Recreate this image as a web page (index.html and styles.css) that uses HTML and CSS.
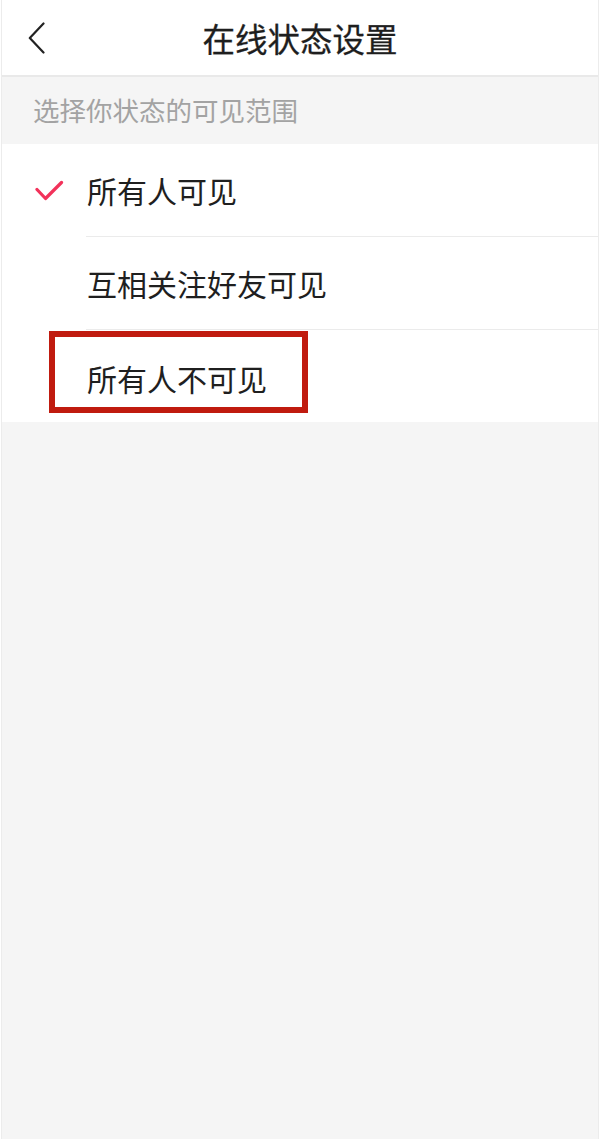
FILE: index.html
```html
<!DOCTYPE html>
<html lang="zh-CN">
<head>
<meta charset="utf-8">
<title>在线状态设置</title>
<link rel="stylesheet" href="styles.css">
</head>
<body>
<div class="page">
  <header class="header">
    <div class="back">
      <svg width="18" height="32" viewBox="0 0 18 32" aria-hidden="true">
        <polyline points="15.5,1.5 1.8,16 15.5,30.5" fill="none" stroke="#222" stroke-width="2.2" stroke-linecap="round" stroke-linejoin="round"/>
      </svg>
    </div>
    <h1 class="title">在线状态设置</h1>
    <div class="spacer"></div>
  </header>
  <div class="section-label">选择你状态的可见范围</div>
  <ul class="options">
    <li class="option">
      <span class="mark">
        <svg width="30" height="24" viewBox="0 0 30 24" aria-hidden="true">
          <polyline points="2,9.5 10.5,18.5 26.5,2.5" fill="none" stroke="#f2325a" stroke-width="3.2" stroke-linecap="round" stroke-linejoin="round"/>
        </svg>
      </span>
      <span class="label">所有人可见</span>
    </li>
    <li class="option">
      <span class="mark"></span>
      <span class="label">互相关注好友可见</span>
    </li>
    <li class="option highlighted">
      <span class="mark"></span>
      <span class="label">所有人不可见</span>
      <span class="highlight-box"></span>
    </li>
  </ul>
  <div class="rest"></div>
</div>
</body>
</html>
```
FILE: styles.css
```css
html, body {
  margin: 0;
  padding: 0;
  height: 100%;
  background: #ffffff;
}

body {
  font-family: "Noto Sans CJK SC", "Noto Sans", sans-serif;
  color: #222222;
}

.page {
  margin: 0 1px 1px 1px;
  min-height: 1139px;
  border-left: 1px solid #ececec;
  border-right: 1px solid #ececec;
  display: flex;
  flex-direction: column;
  background: #f5f5f5;
}

.header {
  height: 75px;
  background: #ffffff;
  border-bottom: 2px solid #e9e9e9;
  display: grid;
  grid-template-columns: 80px 1fr 80px;
  align-items: center;
}

.back {
  padding-left: 26px;
  padding-top: 1px;
  display: flex;
  align-items: center;
}

.back svg {
  display: block;
}

.title {
  margin: 0;
  text-align: center;
  font-size: 32.5px;
  font-weight: 400;
  -webkit-text-stroke: 0.3px #1e1e1e;
  line-height: 1;
  color: #1e1e1e;
  padding-top: 2px;
}

.section-label {
  height: 67px;
  display: flex;
  align-items: center;
  padding-left: 31px;
  font-size: 26.5px;
  line-height: 1;
  color: #a3a3a3;
  background: #f5f5f5;
}

.options {
  list-style: none;
  margin: 0;
  padding: 0;
  background: #ffffff;
}

.option {
  position: relative;
  display: flex;
  align-items: stretch;
  height: 93px;
}

.mark {
  width: 84px;
  flex: none;
  display: flex;
  align-items: center;
  padding-left: 33px;
  box-sizing: border-box;
}

.mark svg {
  display: block;
  margin-top: 2px;
}

.label {
  flex: 1;
  display: flex;
  align-items: center;
  padding-left: 1px;
  font-size: 30px;
  line-height: 1;
  color: #1f1f1f;
  border-bottom: 1px solid #ebebeb;
}

.option:last-child {
  height: 92px;
}

.option:last-child .label {
  border-bottom: none;
  padding-top: 4px;
}

.highlight-box {
  position: absolute;
  left: 47px;
  top: 1px;
  width: 259px;
  height: 82px;
  box-sizing: border-box;
  border: 6px solid #c01b0f;
  pointer-events: none;
}

.rest {
  flex: 1;
  background: #f5f5f5;
}
```
